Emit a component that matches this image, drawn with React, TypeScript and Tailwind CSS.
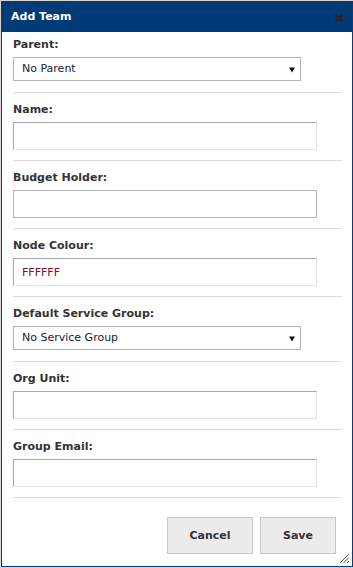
import { ReactNode } from 'react'

const font = "font-['DejaVu_Sans',sans-serif]"

const Arrow = () => (
    <svg width="6" height="6" viewBox="0 0 6 6" className="absolute left-[275px] top-[9px]">
        <path d="M0 0.5H6L3 5.5Z" fill="#111" />
    </svg>
)

const Select = ({ value }: { value: string }) => (
    <div className="relative mt-[6px] flex h-[24px] w-[288px] items-center border border-[#b4b4b4] bg-white pl-[8px] pt-[1px] text-[11px] text-[#1c1c2c]">
        {value}
        <Arrow />
    </div>
)

const Input = ({ value = '', flat = false }: { value?: string; flat?: boolean }) => (
    <input
        readOnly
        value={value}
        className={
            flat
                ? 'mt-[6px] block h-[28px] w-[304px] border border-[#b5b5b5] bg-white pl-[8px] text-[11px] text-[#7d0c2e] outline-none'
                : 'mt-[6px] block h-[28px] w-[304px] border border-t-[#a8a8a8] border-l-[#a8a8a8] border-b-[#e2e2e2] border-r-[#e2e2e2] bg-white pl-[8px] text-[11px] text-[#7d0c2e] outline-none'
        }
    />
)

const Field = ({
    label,
    first = false,
    select = false,
    children
}: {
    label: string
    first?: boolean
    select?: boolean
    children: ReactNode
}) => (
    <div
        className={`border-b border-[#dcdcdc] ${first ? 'pt-[6px]' : 'pt-[10px]'} ${select ? 'pb-[11px]' : 'pb-[10px]'}`}
    >
        <div className="text-[11px] font-bold leading-[13px] text-[#333]">{label}</div>
        {children}
    </div>
)

export default function App() {
    return (
        <div className={`h-[568px] w-[353px] bg-[#d6d6d6] pl-[1px] pt-[1px] ${font}`}>
            <div className="relative flex h-[566px] w-[352px] flex-col border border-[#0b3b74] bg-white">
                <div className="flex h-[30px] items-center justify-between bg-[#003a77] pl-[9px] pr-[8px]">
                    <span className="pt-[1px] text-[11px] font-bold text-white">Add Team</span>
                    <svg width="10" height="10" viewBox="0 0 10 10" className="mt-[2px]">
                        <path d="M1.5 1.5L8.5 8.5M8.5 1.5L1.5 8.5" stroke="#262626" strokeWidth="3" />
                    </svg>
                </div>
                <div className="pl-[11px] pr-[10px]">
                    <Field label="Parent:" first select>
                        <Select value="No Parent" />
                    </Field>
                    <Field label="Name:">
                        <Input />
                    </Field>
                    <Field label="Budget Holder:">
                        <Input flat />
                    </Field>
                    <Field label="Node Colour:">
                        <Input value="FFFFFF" />
                    </Field>
                    <Field label="Default Service Group:" select>
                        <Select value="No Service Group" />
                    </Field>
                    <Field label="Org Unit:">
                        <Input />
                    </Field>
                    <Field label="Group Email:">
                        <Input />
                    </Field>
                </div>
                <div className="mt-[19px] flex justify-end gap-[7px] pr-[16px]">
                    <button className="h-[37px] w-[86px] border border-[#c8c8c8] bg-[#ebebeb] pt-[2px] text-[11px] font-bold text-[#333]">
                        Cancel
                    </button>
                    <button className="h-[37px] w-[76px] border border-[#c8c8c8] bg-[#ebebeb] pt-[2px] text-[11px] font-bold text-[#333]">
                        Save
                    </button>
                </div>
                <svg width="11" height="11" viewBox="0 0 11 11" className="absolute bottom-[2px] right-[2px]">
                    <path d="M10 1L1 10M10 4.5L4.5 10M10 8L8 10" stroke="#555" strokeWidth="1" />
                </svg>
            </div>
        </div>
    )
}
